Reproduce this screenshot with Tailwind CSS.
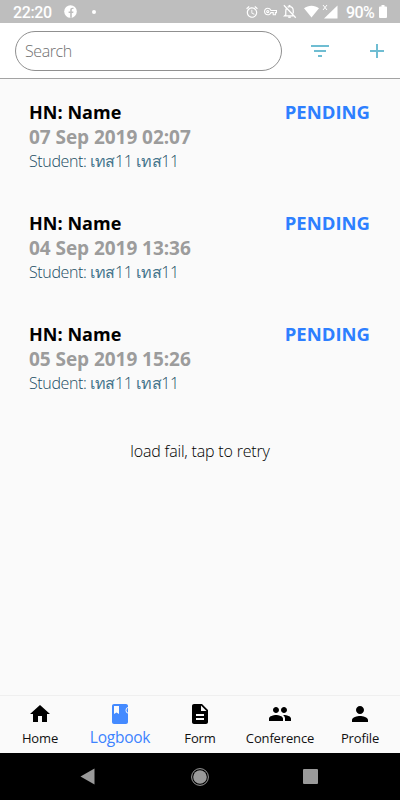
<!DOCTYPE html>
<html lang="en">
<head>
    <meta charset="UTF-8">
    <meta name="viewport" content="width=device-width, initial-scale=1.0">
    <title>Logbook</title>
    <script src="https://cdn.jsdelivr.net/npm/@tailwindcss/browser@4"></script>
</head>
<body class="bg-[#fafafa] font-['Open_Sans','Noto_Sans',sans-serif]">
    <div class="w-[400px] h-[800px] flex flex-col overflow-hidden">
        <!-- status bar -->
        <div class="h-[23px] shrink-0 bg-[#bebebe] text-white flex items-center pl-[13px] pr-[13px] font-['Roboto',sans-serif] font-medium">
            <span class="text-[16px] leading-[23px] w-[40px] pt-[2px] tracking-[-0.4px]">22:20</span>
            <svg class="w-[13px] h-[13px] ml-[11px]" viewBox="0 0 13 13"><circle cx="6.5" cy="6.5" r="6.3" fill="#fff"/><path d="M6.2 12.8V8H4.6V6.4h1.6V5c0-1.6.9-2.3 2.3-2.3h1v1.4h-.8c-.7 0-.9.3-.9 1v1.3h1.7L9.2 8H7.8v4.8z" fill="#bebebe"/></svg>
            <span class="w-1 h-1 rounded-full bg-white ml-[15px]"></span>
            <div class="ml-auto flex items-center">
                <svg class="w-[14px] h-[14px]" viewBox="0 0 24 24" fill="#fff"><path d="M22 5.720l-4.600-3.860-1.290 1.530 4.600 3.860L22 5.720zM7.880 3.390L6.600 1.860 2 5.710l1.290 1.530 4.590-3.850zM12.500 8H11v6l4.750 2.850.75-1.230-4-2.370V8zM12 4c-4.970 0-9 4.030-9 9s4.020 9 9 9c4.970 0 9-4.030 9-9s-4.030-9-9-9zm0 16c-3.870 0-7-3.130-7-7s3.130-7 7-7 7 3.130 7 7-3.130 7-7 7z"/></svg>
                <svg class="w-[13px] h-[13px] ml-[5px]" viewBox="0 0 24 24" fill="#fff"><path d="M22 19h-6v-4h-2.680c-1.140 2.420-3.600 4-6.320 4-3.860 0-7-3.140-7-7s3.140-7 7-7c2.720 0 5.170 1.580 6.320 4H24v6h-2v4zm-4-2h2v-4h2v-2H11.940l-.23-.67C11.010 8.340 9.110 7 7 7c-2.760 0-5 2.240-5 5s2.240 5 5 5c2.110 0 4.010-1.340 4.710-3.330l.23-.67H18v4zM7 15c-1.650 0-3-1.350-3-3s1.350-3 3-3 3 1.350 3 3-1.350 3-3 3zm0-4c-.55 0-1 .45-1 1s.45 1 1 1 1-.45 1-1-.45-1-1-1z"/></svg>
                <svg class="w-[15px] h-[15px] ml-[5px]" viewBox="0 0 24 24" fill="none" stroke="#fff" stroke-width="2"><path d="M3 2l19 20M7 7.500C6 9 6 10 6 12v5l-2 2h14M9 5c1-.7 2-1 3-1 4 0 6 3 6 7v4"/><path d="M12 1.500V4" stroke-width="3"/><path d="M10 21h4" stroke-width="2.500"/></svg>
                <svg class="w-[15px] h-[13px] ml-[7px]" viewBox="0 0 15 13" fill="#fff"><path d="M0 3.300C4.300-.1 10.700-.1 15 3.300L7.500 12.500z"/></svg>
                <svg class="w-[16px] h-[15px] ml-[3px] mb-[1px]" viewBox="0 0 16 15" fill="#fff"><path d="M15.500 1.500v13H2z"/><path d="M1 1l4 5M5 1L1 6" stroke="#fff"/></svg>
                <span class="text-[16px] leading-[23px] w-[29px] ml-[8px] pt-[2px] tracking-[-0.6px] whitespace-nowrap">90%</span>
                <svg class="w-[8px] h-[13px] ml-[4px]" viewBox="0 0 8 13" fill="#fff"><path d="M2.500 0h3v1.500H7q1 0 1 1V12q0 1-1 1H1q-1 0-1-1V2.500q0-1 1-1h1.500z"/></svg>
            </div>
        </div>

        <!-- search header -->
        <div class="h-[56px] shrink-0 bg-white border-b border-[#a3a3a3] flex items-center pl-[15px]">
            <div class="w-[267px] h-[40px] rounded-[20px] border border-[#909090] flex items-center pl-[9px] text-[16px] font-light text-[#707070] tracking-[-0.4px]">Search</div>
            <svg class="w-[18px] h-[12px] ml-[29px]" viewBox="0 0 18 12" fill="#6fbdd2"><path d="M0 0h18v2H0zM3 5h12v2H3zM7 10h4v2H7z"/></svg>
            <svg class="w-[14px] h-[14px] ml-[41px]" viewBox="0 0 14 14" fill="#6fbdd2"><path d="M6 0h2v6h6v2H8v6H6V8H0V6h6z"/></svg>
        </div>

        <!-- entries -->
        <div class="grow pt-[21px]">
            <div class="h-[111px] pl-[29px] pr-[30px]">
                <div class="flex justify-between items-start h-[25px] font-bold">
                    <span class="text-[18px] leading-[25px] text-black tracking-[0.05px]">HN: Name</span>
                    <span class="text-[18.500px] leading-[24px] text-[#2d7fff]">PENDING</span>
                </div>
                <div class="text-[19px] leading-[25px] font-bold text-[#9c9c9c] tracking-[-0.05px]">07 Sep 2019 02:07</div>
                <div class="text-[16px] leading-[22px] font-light text-[#1b4d64] tracking-[-0.38px]">Student: <span class="text-[#44758c]">เทส</span>11 <span class="text-[#44758c]">เทส</span>11</div>
            </div>
            <div class="h-[111px] pl-[29px] pr-[30px]">
                <div class="flex justify-between items-start h-[25px] font-bold">
                    <span class="text-[18px] leading-[25px] text-black tracking-[0.05px]">HN: Name</span>
                    <span class="text-[18.500px] leading-[24px] text-[#2d7fff]">PENDING</span>
                </div>
                <div class="text-[19px] leading-[25px] font-bold text-[#9c9c9c] tracking-[-0.05px]">04 Sep 2019 13:36</div>
                <div class="text-[16px] leading-[22px] font-light text-[#1b4d64] tracking-[-0.38px]">Student: <span class="text-[#44758c]">เทส</span>11 <span class="text-[#44758c]">เทส</span>11</div>
            </div>
            <div class="h-[111px] pl-[29px] pr-[30px]">
                <div class="flex justify-between items-start h-[25px] font-bold">
                    <span class="text-[18px] leading-[25px] text-black tracking-[0.05px]">HN: Name</span>
                    <span class="text-[18.500px] leading-[24px] text-[#2d7fff]">PENDING</span>
                </div>
                <div class="text-[19px] leading-[25px] font-bold text-[#9c9c9c] tracking-[-0.05px]">05 Sep 2019 15:26</div>
                <div class="text-[16px] leading-[22px] font-light text-[#1b4d64] tracking-[-0.38px]">Student: <span class="text-[#44758c]">เทส</span>11 <span class="text-[#44758c]">เทส</span>11</div>
            </div>
            <div class="pt-[7px] text-center text-[16px] leading-[22px] font-light text-black tracking-[-0.18px]">load fail, tap to retry</div>
        </div>

        <!-- tabs -->
        <div class="h-[58px] shrink-0 border-t border-[#efefef] grid grid-cols-5 text-[13px] leading-[18px] text-[#111] text-center tracking-[-0.15px]">
            <div class="flex flex-col items-center pt-[6px]">
                <svg class="w-6 h-6" viewBox="0 0 24 24"><path d="M10 20v-6h4v6h5v-8h3L12 3 2 12h3v8z"/></svg>
                <span class="mt-[3px]">Home</span>
            </div>
            <div class="flex flex-col items-center pt-[6px] text-[#3d83ff]">
                <svg class="w-6 h-6" viewBox="0 0 24 24"><path fill="#448aff" d="M18 2H6c-1.100 0-2 .9-2 2v16c0 1.100.9 2 2 2h12c1.100 0 2-.9 2-2V4c0-1.100-.9-2-2-2zM6 4h5v8l-2.500-1.500L6 12V4z"/><path d="M20 5.500q-2 0-2 2.800t2 2.800" fill="none" stroke="#fafafa"/></svg>
                <span class="text-[15.500px] mt-[2px] tracking-[-0.25px]">Logbook</span>
            </div>
            <div class="flex flex-col items-center pt-[6px]">
                <svg class="w-6 h-6" viewBox="0 0 24 24" fill="#000"><path d="M14 2H6c-1.100 0-1.990.9-1.990 2L4 20c0 1.100.89 2 1.990 2H18c1.100 0 2-.9 2-2V8l-6-6zm2 16H8v-2h8v2zm0-4H8v-2h8v2zm-3-5V3.500L18.500 9H13z"/></svg>
                <span class="mt-[3px]">Form</span>
            </div>
            <div class="flex flex-col items-center pt-[6px]">
                <svg class="w-6 h-6" viewBox="0 0 24 24"><path d="M16 11c1.660 0 2.990-1.340 2.990-3S17.660 5 16 5c-1.660 0-3 1.340-3 3s1.340 3 3 3zm-8 0c1.660 0 2.990-1.340 2.990-3S9.660 5 8 5C6.340 5 5 6.340 5 8s1.340 3 3 3zm0 2c-2.330 0-7 1.170-7 3.500V19h14v-2.500c0-2.330-4.670-3.500-7-3.500zm8 0c-.29 0-.62.02-.97.05 1.160.84 1.970 1.970 1.970 3.450V19h6v-2.500c0-2.330-4.670-3.500-7-3.500z"/></svg>
                <span class="mt-[3px]">Conference</span>
            </div>
            <div class="flex flex-col items-center pt-[6px]">
                <svg class="w-6 h-6" viewBox="0 0 24 24"><path d="M12 12c2.210 0 4-1.790 4-4s-1.790-4-4-4-4 1.790-4 4 1.790 4 4 4zm0 2c-2.670 0-8 1.340-8 4v2h16v-2c0-2.660-5.330-4-8-4z"/></svg>
                <span class="mt-[3px]">Profile</span>
            </div>
        </div>

        <!-- android navigation -->
        <div class="h-[47px] shrink-0 bg-black flex items-center pl-[80px]">
            <svg class="w-[15px] h-[17px]" viewBox="0 0 15 17"><path d="M14.500.5v16L.5 8.500z" fill="#9a9a9a"/></svg>
            <svg class="w-[18px] h-[18px] ml-[96px]" viewBox="0 0 18 18"><circle cx="9" cy="9" r="8.400" fill="none" stroke="#9a9a9a"/><circle cx="9" cy="9" r="6.800" fill="#9a9a9a"/></svg>
            <div class="w-[15px] h-[15px] rounded-[1px] bg-[#9a9a9a] ml-[94px]"></div>
        </div>
    </div>
</body>
</html>
